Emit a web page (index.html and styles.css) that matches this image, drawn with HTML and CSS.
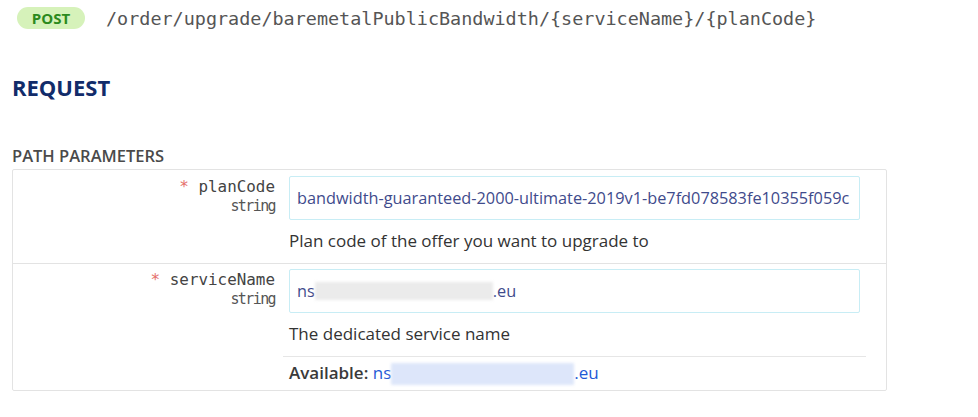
FILE: index.html
```html
<!DOCTYPE html>
<html lang="en">
<head>
<meta charset="utf-8">
<title>POST /order/upgrade/baremetalPublicBandwidth</title>
<link rel="stylesheet" href="styles.css">
</head>
<body>
<div class="page">
  <div class="endpoint">
    <span class="badge">POST</span>
    <span class="path">/order/upgrade/baremetalPublicBandwidth/{serviceName}/{planCode}</span>
  </div>
  <h2 class="section-title">REQUEST</h2>
  <h3 class="group-title">PATH PARAMETERS</h3>
  <div class="params">
    <div class="param">
      <div class="param-label">
        <div class="param-name"><span class="req">*</span> planCode</div>
        <div class="param-type">string</div>
      </div>
      <div class="param-body">
        <div class="field">bandwidth-guaranteed-2000-ultimate-2019v1-be7fd078583fe10355f059c</div>
        <div class="desc">Plan code of the offer you want to upgrade to</div>
      </div>
    </div>
    <div class="param">
      <div class="param-label">
        <div class="param-name"><span class="req">*</span> serviceName</div>
        <div class="param-type">string</div>
      </div>
      <div class="param-body">
        <div class="field">ns<span class="blur blur-field" aria-hidden="true"></span>.eu</div>
        <div class="desc">The dedicated service name</div>
        <div class="available"><span class="avail-label">Available:</span> <a class="avail-link">ns<span class="blur blur-link" aria-hidden="true"></span>.eu</a></div>
      </div>
    </div>
  </div>
</div>
</body>
</html>
```

FILE: styles.css
```css
* { box-sizing: border-box; }
html, body { margin: 0; padding: 0; background: #fff; }
body {
  font-family: "Open Sans", "Noto Sans", sans-serif;
  color: #333;
  font-size: 17px;
}
.page {
  padding: 0 91px 0 12px;
}
.endpoint {
  display: flex;
  align-items: center;
  height: 36px;
  padding-left: 5px;
  gap: 21px;
}
.badge {
  display: inline-flex;
  align-items: center;
  justify-content: center;
  width: 68px;
  height: 22px;
  border-radius: 11px;
  background: #d6f2ba;
  color: #2c8a1d;
  font-weight: 700;
  font-size: 15px;
}
.path {
  font-family: "DejaVu Sans Mono", "Liberation Mono", monospace;
  font-size: 18.45px;
  color: #555;
}
.section-title {
  margin: 37px 0 0;
  font-size: 22px;
  line-height: 28px;
  font-weight: 700;
  color: #122c6a;
}
.group-title {
  margin: 44px 0 0;
  font-size: 16.5px;
  line-height: 22px;
  font-weight: 600;
  color: #4a4a4a;
}
.params {
  margin-top: 2px;
  border: 1px solid #e3e3e3;
  border-radius: 2px;
}
.param {
  display: grid;
  grid-template-columns: 270px 583px;
  padding-top: 6px;
}
.param + .param {
  border-top: 1px solid #e3e3e3;
  padding-top: 5px;
}
.param-label {
  text-align: right;
  padding-right: 8px;
  padding-top: 1px;
  font-family: "DejaVu Sans Mono", "Liberation Mono", monospace;
  color: #444;
}
.param-name {
  font-size: 15.9px;
  line-height: 20px;
}
.req { color: #e5706c; }
.param-type {
  font-size: 15px;
  letter-spacing: -1.6px;
  line-height: 18px;
  color: #555;
}
.field {
  margin: 0 6px;
  height: 44px;
  border: 1px solid #c8edf5;
  border-radius: 2px;
  padding: 0 7px;
  display: flex;
  align-items: center;
  white-space: nowrap;
  overflow: hidden;
  color: #3f4b8c;
  font-size: 16.3px;
}
.desc {
  padding: 9px 6px 10px;
  line-height: 24px;
  font-size: 17px;
  color: #333;
}
.available {
  border-top: 1px solid #e6e6e6;
  padding: 4px 6px 5px;
  line-height: 24px;
  font-size: 17px;
}
.avail-label {
  font-weight: 600;
  color: #3a3a3a;
}
.avail-link {
  color: #1f5ad6;
}
.blur {
  display: inline-block;
  height: 18px;
  filter: blur(1.5px);
  vertical-align: middle;
}
.blur-field { width: 178px; background: #ebebeb; }
.blur-link { width: 183px; background: #dde6fa; height: 22px; }
```
